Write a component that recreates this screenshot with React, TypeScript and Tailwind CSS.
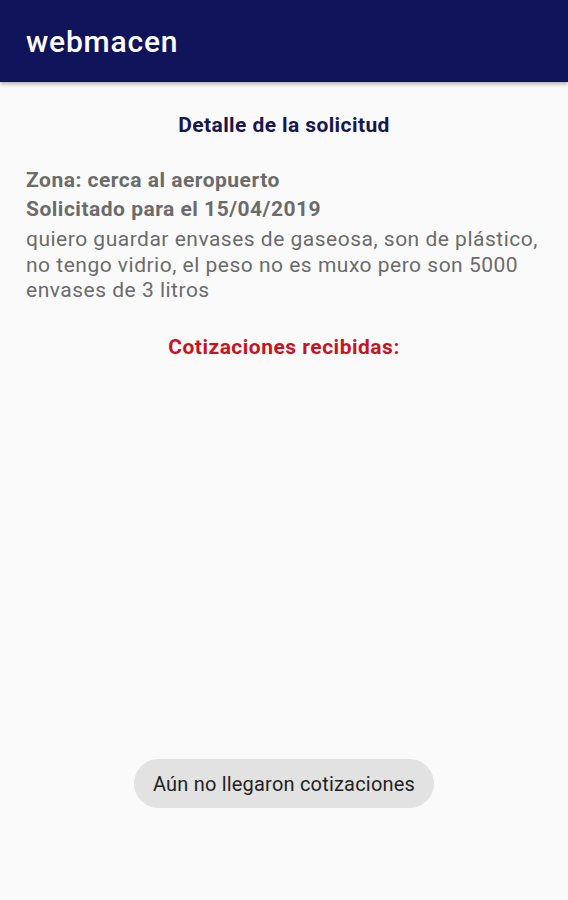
export default function App() {
  return (
    <div className="flex flex-col h-[900px] bg-[#fafafa] font-['Roboto',sans-serif] overflow-hidden">
      {/* App bar */}
      <header className="h-[82px] shrink-0 bg-[#10145a] flex items-center px-[26px] shadow-[0_2px_4px_rgba(0,0,0,0.3)] relative z-10">
        <h1 className="text-white text-[30px] font-medium tracking-[0.8px]">webmacen</h1>
      </header>

      {/* Content */}
      <main className="flex-1 flex flex-col px-[26px]">
        <h2 className="text-center text-[21px] font-bold tracking-[0.4px] text-[#17174f] mt-[29px] leading-[28px]">
          Detalle de la solicitud
        </h2>

        <div className="mt-[27px] text-[#6b6b6b]">
          <p className="text-[21px] font-bold tracking-[0.5px] leading-[29px]">Zona: cerca al aeropuerto</p>
          <p className="text-[21px] font-bold tracking-[0.5px] leading-[29px]">Solicitado para el 15/04/2019</p>
          <p className="text-[21px] tracking-[0.5px] leading-[25.5px] mt-[3px]">
            quiero guardar envases de gaseosa, son de plástico, no tengo vidrio, el peso no es muxo pero son 5000 envases de 3 litros
          </p>
        </div>

        <h3 className="text-center text-[21px] font-bold tracking-[0.5px] text-[#c8141e] mt-[29px] leading-[28px]">
          Cotizaciones recibidas:
        </h3>

        <div className="flex-1" />

        {/* Toast */}
        <div className="self-center mb-[92px] h-[49px] px-[19px] rounded-full bg-[#e2e2e2] flex items-center">
          <span className="text-[20px] tracking-[0.2px] text-[#222]">Aún no llegaron cotizaciones</span>
        </div>
      </main>
    </div>
  );
}
